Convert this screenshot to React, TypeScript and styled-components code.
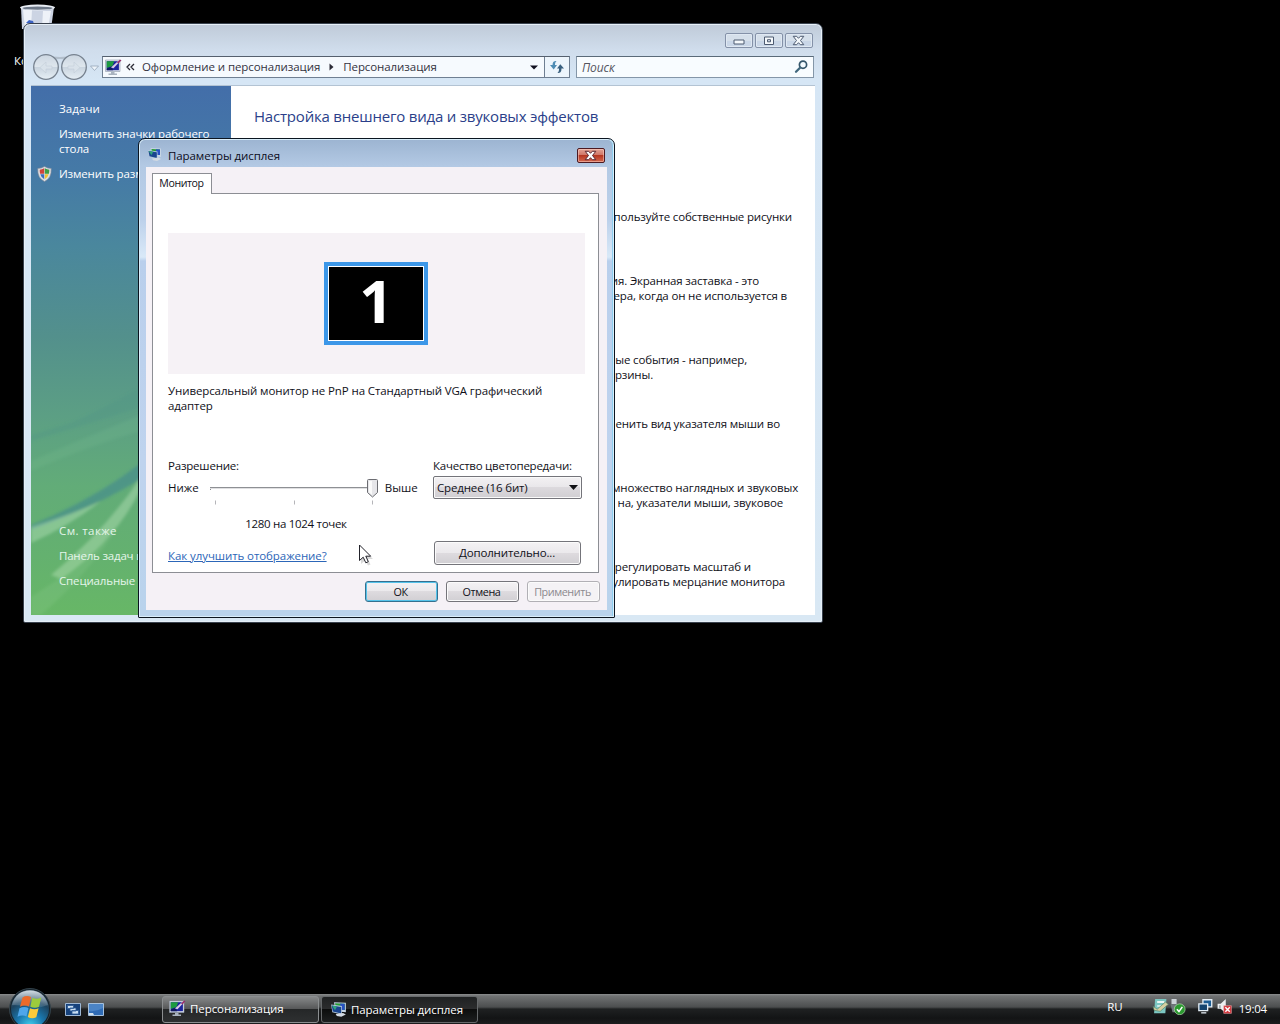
import React from "react";
import styled, { createGlobalStyle, css } from "styled-components";

const GlobalStyle = createGlobalStyle`
  * {
    box-sizing: border-box;
  }
  body {
    margin: 0;
    background: #000;
    overflow: hidden;
  }
  button {
    font: inherit;
    letter-spacing: inherit;
    color: inherit;
    padding: 0;
  }
  svg {
    display: block;
    flex: none;
  }
`;

const Desktop = styled.div`
  position: relative;
  width: 1280px;
  height: 1024px;
  overflow: hidden;
  display: flex;
  flex-direction: column;
  justify-content: flex-end;
  background: #000;
  font-family: "Open Sans", "Noto Sans", sans-serif;
  font-size: 11.5px;
  line-height: 15px;
  letter-spacing: -0.08px;
  color: #101018;
  white-space: nowrap;
`;

const DesktopIcon = styled.div`
  position: absolute;
  left: 14px;
  top: 2px;
  color: #fff;

  svg {
    margin: 0 0 24px 5px;
  }
`;

/* ---------- explorer window ---------- */

const Explorer = styled.section`
  position: absolute;
  left: 23px;
  top: 23px;
  width: 800px;
  height: 600px;
  padding: 0 7px 7px;
  border: 1px solid #39424e;
  border-radius: 7px 7px 2px 2px;
  background: linear-gradient(#bfcad8, #d0ddec 26px, #d6e6f5 56px, #d9e8f4);
  box-shadow: inset 0 0 0 1px #e6eff7;
`;

const Caption = styled.header`
  height: 32px;
  padding: 9px 2px 0 0;
  display: flex;
  justify-content: flex-end;
  align-items: flex-start;
  gap: 2px;
`;

const CaptionButton = styled.button`
  width: 28px;
  height: 15px;
  display: grid;
  place-items: center;
  border: 1px solid #8491a8;
  border-radius: 2px;
  background: linear-gradient(#d5dfea 50%, #c9d6e7 50%);
  box-shadow: inset 0 0 0 1px #dfe8f2;

  svg {
    margin-right: 1px;
  }
`;

const NavBar = styled.div`
  height: 30px;
  display: flex;
  align-items: flex-start;
`;

const AddressBar = styled.div`
  width: 468px;
  height: 22px;
  margin-left: 3px;
  padding-left: 2px;
  display: flex;
  align-items: center;
  border: 1px solid #6f7f92;
  border-top-color: #55606e;
  background: #f6fafe;
  color: #33333f;
`;

const Crumb = styled.span`
  padding-bottom: 2px;
`;

const RefreshCell = styled.span`
  width: 25px;
  height: 20px;
  display: grid;
  place-items: center;
  border-left: 1px solid #6f7f92;
  background: #edf5fc;
`;

const SearchBox = styled.div`
  width: 238px;
  height: 22px;
  margin-left: 6px;
  padding: 0 5px;
  display: flex;
  align-items: center;
  justify-content: space-between;
  border: 1px solid #8496a8;
  border-top-color: #5a6a79;
  background: #f8fcff;
  font-style: italic;
  font-size: 12px;
  color: #55555f;
`;

const ExplorerBody = styled.div`
  height: 529px;
  display: flex;
  background: #fff;
  box-shadow: 0 -1px 0 #b3c3d3;
`;

const Sidebar = styled.nav`
  position: relative;
  width: 200px;
  padding: 15px 0 27px 7px;
  display: flex;
  flex-direction: column;
  gap: 10px;
  overflow: hidden;
  color: #fff;
  background: linear-gradient(
    #436ea9,
    #457aa6 90px,
    #4a879d 160px,
    #53908c 250px,
    #5c9f84 330px,
    #62ac78 400px,
    #64b16f 470px,
    #67b766
  );
`;

const Swoosh = styled.svg`
  position: absolute;
  left: 0;
  bottom: 0;
`;

const TaskLink = styled.a<{ $spacing?: number; $dim?: boolean }>`
  position: relative;
  display: flex;
  align-items: flex-start;
  padding-left: 21px;
  letter-spacing: ${(props) => props.$spacing ?? -0.15}px;
  color: ${(props) => (props.$dim ? "#e4f5ea" : "#fff")};

  svg {
    margin: 0 7px 0 -22px;
  }
`;

const Spacer = styled.div`
  flex: 1;
`;

const Content = styled.main`
  flex: 1;
  padding-top: 19px;
`;

const Title = styled.h1`
  margin: 0 0 82px 23px;
  font-size: 15px;
  line-height: 22px;
  font-weight: 400;
  letter-spacing: -0.2px;
  color: #2b3f8a;
`;

const Paragraph = styled.p<{ $tight?: boolean }>`
  margin: 0 0 ${(props) => (props.$tight ? 34 : 49)}px;
`;

// строка прижата вправо, левая часть уходит под диалог
const Line = styled.span<{ $end: number }>`
  display: block;
  width: ${(props) => props.$end}px;
  text-align: right;
  letter-spacing: -0.16px;
`;

/* ---------- display dialog ---------- */

const Dialog = styled.section`
  position: absolute;
  left: 138px;
  top: 138px;
  width: 477px;
  height: 480px;
  padding: 0 7px 7px;
  border: 1px solid #0b1520;
  border-radius: 7px 7px 1px 1px;
  background: linear-gradient(
    #9cb4d1,
    #b3c9e4 27px,
    #bcd0ea 80px,
    #d9e9f8 118px,
    #b9cfec 122px,
    #bfd3ee 320px,
    #b9d3ec
  );
  box-shadow: inset 0 0 0 1px #d9eefb, inset -2px 0 0 #8fcdee;
`;

const DialogCaption = styled.header`
  height: 28px;
  padding: 6px 2px 0 1px;
  display: flex;
  align-items: flex-start;
  color: #0c0c1c;

  > svg {
    margin-top: 2px;
  }
`;

const DialogTitle = styled.span`
  flex: 1;
  padding-top: 3px;
  margin-left: 6px;
`;

const CloseButton = styled.button`
  width: 28px;
  height: 15px;
  margin-top: 3px;
  padding-right: 1px;
  display: grid;
  place-items: center;
  border: 1px solid #4c1a22;
  border-radius: 2px;
  background: linear-gradient(#e2a395, #cf7465 48%, #b53722 50%, #d4674e);
  box-shadow: inset 0 0 0 1px rgba(255, 215, 205, 0.5);
`;

const DialogBody = styled.div`
  height: 443px;
  padding: 6px 8px 0 6px;
  background: #f5f1f6;
`;

const Tab = styled.div`
  position: relative;
  z-index: 1;
  width: 60px;
  height: 21px;
  margin-bottom: -1px;
  padding: 2px 1px 0 0;
  text-align: center;
  font-size: 10.6px;
  letter-spacing: -0.4px;
  border: 1px solid #8c8e94;
  border-bottom: 0;
  background: #fff;
`;

const TabPage = styled.div`
  height: 380px;
  padding: 39px 13px 0 15px;
  border: 1px solid #8c8e94;
  background: #fff;
`;

const Preview = styled.div`
  height: 141px;
  padding-right: 1px;
  display: grid;
  place-items: center;
  background: #f6f2f6;
`;

const MonitorTile = styled.div`
  width: 104px;
  height: 83px;
  border: 4px solid #3c97e8;
  box-shadow: inset 0 0 0 1px #fff;
  background: #000;
  color: #fff;
  display: flex;
  justify-content: center;
  font-size: 59px;
  font-weight: 700;
  line-height: 69px;
`;

const MonitorName = styled.p`
  margin: 9px 0 45px;
  letter-spacing: -0.1px;
`;

const Settings = styled.div`
  display: flex;
  justify-content: space-between;
`;

const Resolution = styled.div`
  width: 252px;
  letter-spacing: -0.2px;
`;

const SliderRow = styled.div`
  display: flex;
  height: 29px;
  margin-top: 7px;
  letter-spacing: 0;
`;

const ResolutionValue = styled.div`
  margin-top: 7px;
  padding-left: 4px;
  text-align: center;
  letter-spacing: -0.3px;
`;

const Quality = styled.div`
  width: 149px;
  margin-right: 3px;
  letter-spacing: -0.24px;
`;

const Select = styled.div`
  height: 23px;
  margin-top: 3px;
  padding: 0 3px 1px 3px;
  display: flex;
  align-items: center;
  justify-content: space-between;
  letter-spacing: -0.15px;
  border: 1px solid #74747a;
  border-radius: 2px;
  background: linear-gradient(#f3f1f3, #e9e7ea 48%, #dcd9dd 50%, #d0ced2);
  box-shadow: inset 0 0 0 1px #fafafa;
`;

const PageFooter = styled.div`
  margin-top: 10px;
  padding-right: 4px;
  display: flex;
  justify-content: space-between;
  align-items: flex-start;
`;

const HelpLink = styled.a`
  margin-top: 7px;
  color: #2c66b8;
  text-decoration: underline;
`;

const PushButton = styled.button<{
  $wide?: boolean;
  $primary?: boolean;
  $disabled?: boolean;
}>`
  width: ${(props) => (props.$wide ? 147 : 73)}px;
  height: ${(props) => (props.$wide ? 24 : 21)}px;
  padding: ${(props) => (props.$wide ? "0 1px 2px 0" : "0 2px 0 0")};
  font-size: ${(props) => (props.$wide ? 11.5 : 10.8)}px;
  letter-spacing: ${(props) => (props.$wide ? -0.15 : -0.42)}px;
  border: 1px solid #74747a;
  border-radius: 3px;
  background: linear-gradient(#f4f2f4, #ebe9ec 48%, #dedbdf 50%, #d1cfd3);
  box-shadow: inset 0 0 0 1px #fbfbfb;

  ${(props) =>
    props.$primary &&
    css`
      border-color: #35708f;
      box-shadow: inset 0 0 0 1px #55c3ea;
    `}

  ${(props) =>
    props.$disabled &&
    css`
      color: #8b898e;
      border-color: #b1b0b5;
      background: #f4f2f5;
    `}
`;

const DialogButtons = styled.footer`
  margin-top: 8px;
  display: flex;
  justify-content: flex-end;
  gap: 8px;
  margin-right: -1px;
`;

const Cursor = styled.svg`
  position: absolute;
  left: 358px;
  top: 544px;
`;

/* ---------- taskbar ---------- */

const Taskbar = styled.footer`
  position: relative;
  height: 30px;
  display: flex;
  align-items: flex-start;
  color: #fff;
  background: linear-gradient(
    #8b8d8e,
    #707273 2px,
    #4c4e4f 13px,
    #1f2122 15px,
    #131415 24px,
    #1c1d1e
  );
`;

const StartOrb = styled.button`
  width: 44px;
  height: 36px;
  margin: -6px 13px 0 8px;
  border: 0;
  background: none;
`;

const QuickLaunch = styled.div`
  width: 97px;
  padding-top: 9px;
  display: flex;
  gap: 7px;
`;

const TaskButton = styled.button<{ $active?: boolean }>`
  width: 157px;
  height: 27px;
  margin: 2px 2px 0 0;
  padding: ${(props) => (props.$active ? "0 0 0 8px" : "0 0 2px 6px")};
  display: flex;
  align-items: center;
  gap: 4px;
  border: 1px solid ${(props) => (props.$active ? "#66696b" : "#8b8e90")};
  border-radius: 3px;
  color: #fff;
  background: ${(props) =>
    props.$active
      ? "linear-gradient(#1f2122, #2b2c2d 46%, #0c0d0d 50%, #1d1f20)"
      : "linear-gradient(#868889, #58595a 46%, #252728 50%, #2e3031)"};
`;

const Tray = styled.div`
  flex: 1;
  padding: 4px 13px 0 0;
  display: flex;
  justify-content: flex-end;
`;

const Language = styled.span`
  margin: 1px 29px 0 0;
`;

const Clock = styled.span`
  margin: 3px 0 0 5px;
  letter-spacing: -0.2px;
`;

const TrayIcons = styled.span`
  display: flex;
`;

/* ---------- drawings ---------- */

const BinIcon = () => (
  <svg width="38" height="27" viewBox="0 0 38 27">
    <path d="M2 5h33l-3 22H3z" fill="#ccd4e3" />
    <path d="M4 8h9l-1 18H6zM24 9h8l-3 17h-6z" fill="#eef2f8" />
    <ellipse cx="18.500" cy="5.500" rx="17.500" ry="3" fill="#e8edf4" />
    <ellipse cx="18.500" cy="6.200" rx="15" ry="1.600" fill="#6d7888" />
    <path d="M7 21l3-3 4 1 1 3z" fill="#3c63c4" />
  </svg>
);

const NavDrawing = styled.svg`
  margin-top: -4px;
`;

const NavButtons = () => (
  <NavDrawing width="68" height="30" viewBox="0 0 68 30">
    <defs>
      <linearGradient id="nav" x1="0" y1="0" x2="0" y2="1">
        <stop offset="0" stopColor="#ccd6e1" />
        <stop offset=".48" stopColor="#dee6ed" />
        <stop offset=".5" stopColor="#c9d4df" />
        <stop offset="1" stopColor="#e6eff5" />
      </linearGradient>
    </defs>
    <path d="M15 2.500q14 5 28 0v6q-14-3-28 0z" fill="#b3bfcc" />
    <circle cx="15" cy="15" r="12.300" fill="url(#nav)" stroke="#77828f" strokeWidth="1.300" />
    <circle cx="43" cy="15" r="12.300" fill="url(#nav)" stroke="#77828f" strokeWidth="1.300" />
    <path d="M15 10l-6 5.500 6 5.500v-4h6v-3h-6zM43 10l6 5.500-6 5.500v-4h-6v-3h6z" fill="#d9e2ea" stroke="#c3ced9" strokeWidth=".6" />
    <path d="M59.500 14h8l-4 4.500z" fill="#eef4fa" stroke="#94a5b8" strokeWidth=".8" />
  </NavDrawing>
);

const PersonalizeIcon = () => (
  <svg width="17" height="17" viewBox="0 0 17 17">
    <path d="M.5 1h14.500v11.500H.5z" fill="#dde3ec" stroke="#8e99a8" strokeWidth=".6" />
    <path d="M1.700 2.200h12.200v9H1.700z" fill="#1b249c" />
    <path d="M1.700 2.200h7.500L7.500 7l-5.800 2z" fill="#1d9b3f" />
    <path d="M1.700 9.500l4.500-1.500 2 3.200H1.700z" fill="#111a60" />
    <path d="M6 8.500L14.500.7l1.300.8-7.300 7.800z" fill="#d9c9e6" />
    <path d="M12 3.500L15 .5l1.500.8-3 3.200z" fill="#96306a" />
    <path d="M6 12.800h3.500v1.700H12V16H3.500v-1.500H6z" fill="#a9b3bf" />
  </svg>
);

const DisplayIcon = ({ size = 15 }: { size?: number }) => (
  <svg width={size} height={size} viewBox="0 0 15 15">
    <path d="M3.500 1L14 1.500v8.500L5 9z" fill="#c6d5e4" />
    <path d="M4.500 2l8.500.4V8L5 7.500z" fill="#279b35" />
    <path d="M9 2.200l4 .2V8L9 7.700z" fill="#2950c4" />
    <path d="M1 3l9.500 1.500v7.500L2 10z" fill="#b5c9dc" />
    <path d="M1.500 3.900L9.800 5.200v5.900L2.500 9.200z" fill="#1a458f" />
    <path d="M1.700 4l4.500.8-1.800 3.400z" fill="#2fa57c" />
    <path d="M5 11.500l6.500-1L14 12l-4 2-4-.8z" fill="#d3dae2" />
  </svg>
);

const ShieldIcon = () => (
  <svg width="15" height="16" viewBox="0 0 15 16">
    <path d="M7.500.5q3 2 6.700 2 .6 9.500-6.700 13Q.2 12 .8 2.500q3.700 0 6.700-2z" fill="#dcdfe3" stroke="#8b8f98" strokeWidth=".6" />
    <path d="M7.200 2.300Q5 3.600 2.700 3.800q0 2.200.4 4h4.100z" fill="#d0443c" />
    <path d="M7.800 2.300q2.200 1.300 4.500 1.500 0 2.200-.4 4H7.800z" fill="#3f9f45" />
    <path d="M3.300 8.300h3.900v5Q4.300 11.800 3.300 8.300z" fill="#3b6cc0" />
    <path d="M11.700 8.300H7.800v5q2.900-1.500 3.900-5z" fill="#f2c232" />
  </svg>
);

const SidebarSwoosh = () => (
  <Swoosh width="200" height="280" viewBox="0 0 200 280">
    <defs>
      <filter id="soft">
        <feGaussianBlur stdDeviation="1.500" />
      </filter>
    </defs>
    <g filter="url(#soft)">
      <path d="M40 88Q80 70 110 52v20Q60 88 0 106v-6z" fill="#4d9186" opacity=".35" />
      <path d="M0 126Q70 96 110 80v16Q60 110 0 136z" fill="#86c79b" opacity=".15" />
      <path d="M0 190Q60 166 110 128v16Q60 174 0 195z" fill="#3f8790" opacity=".6" />
      <path d="M0 192Q50 176 70 166 40 190 0 208z" fill="#b4dfb8" opacity=".45" />
      <path d="M110 142Q74 196 20 240l10 4Q84 206 110 154z" fill="#c0e6bd" opacity=".4" />
      <path d="M0 262Q46 234 84 196 56 240 10 280H0z" fill="#a4daa0" opacity=".15" />
    </g>
  </Swoosh>
);

const RefreshIcon = () => (
  <svg width="16" height="14" viewBox="0 0 16 14">
    <path d="M7.500 1Q4 .6 3.600 4v1H1L4.700 9.500 8 5H6V4Q6 2.300 7.500 1z" fill="#4e8cb4" />
    <path d="M8.500 13q3.500.4 3.900-3V8.500H15L11.300 4.300 8 8.500h2V10q0 1.700-1.500 3z" fill="#39607f" />
  </svg>
);

const SearchIcon = () => (
  <svg width="14" height="14" viewBox="0 0 14 14">
    <circle cx="9" cy="4.700" r="3.600" fill="#f4fbff" stroke="#35566b" strokeWidth="1.700" />
    <path d="M6.300 7.500L2 11.800" stroke="#41687e" strokeWidth="2.300" strokeLinecap="round" />
  </svg>
);

const CrossIcon = ({ stroke, fill }: { stroke: string; fill: string }) => (
  <svg width="13" height="11" viewBox="0 0 13 11">
    <path
      d="M1.200 1.300h3.500L6.500 3.300l1.800-2h3.500L8.500 5.500l3.300 4.200H8.300l-1.800-2-1.800 2H1.200L4.500 5.500z"
      fill={fill}
      stroke={stroke}
      strokeWidth="1"
    />
  </svg>
);

const SliderDrawing = styled.svg`
  margin: -1px 5px 0 9px;
`;

const Slider = () => (
  <SliderDrawing width="172" height="30" viewBox="0 0 172 30">
    <path d="M2.500 8v3" stroke="#8e9094" />
    <path d="M2 8.500h162" stroke="#8e9094" />
    <path d="M2 9.500h162" stroke="#e0e0e2" />
    <path d="M7.500 21.500v4M86.500 21.500v4M164.500 21.500v4" stroke="#b5b5b9" />
    <path d="M159.500 1.500q0-1 1-1h8q1 0 1 1v12l-5 4.500-5-4.500z" fill="#e6e6e9" stroke="#6c6d72" />
    <path d="M161 2h3v14l-3-2.700z" fill="#fafafa" />
  </SliderDrawing>
);

const StartIcon = () => (
  <svg width="44" height="37" viewBox="0 0 44 37">
    <defs>
      <radialGradient id="orb" cx=".5" cy=".95" r=".9">
        <stop offset="0" stopColor="#3fd0ee" />
        <stop offset=".4" stopColor="#1a77ad" />
        <stop offset=".75" stopColor="#1c435f" />
        <stop offset="1" stopColor="#5f7484" />
      </radialGradient>
      <linearGradient id="gloss" x1="0" y1="0" x2="0" y2="1">
        <stop offset="0" stopColor="#e4ecf2" stopOpacity=".85" />
        <stop offset="1" stopColor="#a9bccb" stopOpacity=".15" />
      </linearGradient>
    </defs>
    <circle cx="22" cy="21" r="20.500" fill="#15222b" stroke="#34434c" />
    <circle cx="22" cy="21" r="19" fill="url(#orb)" />
    <path d="M4 17Q8 2.500 22 2.500T40 17Q30 21 22 19T4 17z" fill="url(#gloss)" />
    <path d="M14.500 9.500q4-2.500 8.500-.5L21 18.500q-4.500-2-9 .3z" fill="#ec6a2a" />
    <path d="M24.300 9.800q4.500 2 9-.3L31 18.800q-4 2-8.700 0z" fill="#9ccb3c" />
    <path d="M11.500 20.300q4.500-2.300 9-.3L18.500 28.500q-4.300-2-9 .3z" fill="#4fa6ea" />
    <path d="M22 20.300q4.500 2 8.600 0l-2.300 9q-4.500 2-8.500-.3z" fill="#fbcb3a" />
  </svg>
);

const SwitchWindowsIcon = () => (
  <svg width="16" height="13" viewBox="0 0 16 13">
    <path d="M.5.5h15v12H.5z" fill="#16427c" stroke="#9fb8d4" />
    <path d="M2.500 2.500h6v3h-6zM5 5h6v3H5zM7 7.500h6.500v3.500H7z" fill="#c9def2" stroke="#2a5893" strokeWidth=".8" />
  </svg>
);

const ShowDesktopIcon = () => (
  <svg width="16" height="13" viewBox="0 0 16 13">
    <path d="M.5.5h15v12H.5z" fill="#2f6bb5" stroke="#a6c0db" />
    <path d="M1 1h14v4Q8 9 1 8z" fill="#4b84c6" />
    <path d="M1 10h4l1 2H1z" fill="#cfe0ee" />
  </svg>
);

const TrayDrawings = () => (
  <svg width="82" height="17" viewBox="0 0 80 16.600">
    <path d="M3 1h11l-1 14H2z" fill="#7cc7c2" />
    <path d="M5 3h7v2H5zM5 7h6v1.500H5z" fill="#e9f6f3" />
    <path d="M1 8l4 3 8-7 3 2-8 7-6-1z" fill="#d6cfa0" stroke="#4a7d62" strokeWidth=".6" />
    <path d="M19 1h5v5h-5z" fill="#cdd3d8" />
    <path d="M18 6h8v8h-6z" fill="#70777c" />
    <circle cx="27" cy="11" r="5.300" fill="#2c9a30" stroke="#c4e8bf" strokeWidth=".6" />
    <path d="M24.300 11l2 2.300 3.300-4.600" fill="none" stroke="#fff" strokeWidth="1.500" />
    <path d="M49.700 1.700h8.600v7h-8.600z" fill="#1c5d94" stroke="#e4eef6" strokeWidth="1.300" />
    <path d="M45.700 5.700h8.600v6.600h-8.600z" fill="#14446e" stroke="#e4eef6" strokeWidth="1.300" />
    <path d="M48 14.500h5" stroke="#dfe8ef" strokeWidth="1.300" />
    <path d="M64 5.500h3l5-4.500v14l-5-4.500h-3z" fill="#eceff1" />
    <path d="M65.500 7h1.500v3h-1.500z" fill="#98a1a8" />
    <path d="M70 7.500h7.500v7.500H70z" fill="#d3323a" stroke="#f3b5b5" strokeWidth=".5" />
    <path d="M71.600 9.100l4.300 4.300m0-4.300l-4.300 4.300" stroke="#fff" strokeWidth="1.400" />
  </svg>
);

const paragraphs = [
  { lines: [{ text: "пользуйте собственные рисунки", end: 561 }] },
  {
    lines: [
      { text: "ия. Экранная заставка - это", end: 528 },
      { text: "ера, когда он не используется в", end: 556 },
    ],
  },
  {
    tight: true,
    lines: [
      { text: "ые события - например,", end: 516 },
      { text: "рзины.", end: 422 },
    ],
  },
  { lines: [{ text: "енить вид указателя мыши во", end: 549 }] },
  {
    lines: [
      { text: "множество наглядных и звуковых", end: 567 },
      { text: "на, указатели мыши, звуковое", end: 552 },
    ],
  },
  {
    lines: [
      { text: "регулировать масштаб и", end: 520 },
      { text: "улировать мерцание монитора", end: 554 },
    ],
  },
];

const ExplorerWindow = () => (
  <Explorer>
    <Caption>
      <CaptionButton>
        <svg width="12" height="9" viewBox="0 0 12 9">
          <path d="M1 4h10v4H1z" fill="#f4f8fb" stroke="#4d5a70" />
        </svg>
      </CaptionButton>
      <CaptionButton>
        <svg width="12" height="10" viewBox="0 0 12 10">
          <path d="M1.500 1h9v7.500h-9z" fill="#f4f8fb" stroke="#4d5a70" />
          <path d="M4.500 3.700h3v2.100h-3z" fill="#dfe7f0" stroke="#4d5a70" />
        </svg>
      </CaptionButton>
      <CaptionButton>
        <CrossIcon stroke="#4d5a70" fill="#f4f8fb" />
      </CaptionButton>
    </Caption>
    <NavBar>
      <NavButtons />
      <AddressBar>
        <PersonalizeIcon />
        <svg width="20" height="8" viewBox="0 0 20 8">
          <path d="M8 1L5 4l3 3M12 1L9 4l3 3" fill="none" stroke="#2b2b36" strokeWidth="1.300" />
        </svg>
        <Crumb>Оформление и персонализация</Crumb>
        <svg width="23" height="8" viewBox="0 0 23 8">
          <path d="M9.500.5v7l4-3.500z" fill="#2b2b36" />
        </svg>
        <Crumb>Персонализация</Crumb>
        <Spacer />
        <svg width="18" height="5" viewBox="0 0 18 5">
          <path d="M4 .5h8L8 4.500z" fill="#101020" />
        </svg>
        <RefreshCell>
          <RefreshIcon />
        </RefreshCell>
      </AddressBar>
      <SearchBox>
        Поиск
        <SearchIcon />
      </SearchBox>
    </NavBar>
    <ExplorerBody>
      <Sidebar>
        <SidebarSwoosh />
        <TaskLink $spacing={0.1}>Задачи</TaskLink>
        <TaskLink>
          Изменить значки рабочего
          <br />
          стола
        </TaskLink>
        <TaskLink>
          <ShieldIcon />
          Изменить разм
        </TaskLink>
        <Spacer />
        <TaskLink $dim $spacing={0.4}>
          См. также
        </TaskLink>
        <TaskLink $dim $spacing={-0.2}>
          Панель задач и
        </TaskLink>
        <TaskLink $dim>Специальные</TaskLink>
      </Sidebar>
      <Content>
        <Title>Настройка внешнего вида и звуковых эффектов</Title>
        {paragraphs.map(({ lines, tight }, index) => (
          <Paragraph key={index} $tight={tight}>
            {lines.map((line) => (
              <Line key={line.text} $end={line.end}>
                {line.text}
              </Line>
            ))}
          </Paragraph>
        ))}
      </Content>
    </ExplorerBody>
  </Explorer>
);

const DisplayDialog = () => (
  <Dialog>
    <DialogCaption>
      <DisplayIcon />
      <DialogTitle>Параметры дисплея</DialogTitle>
      <CloseButton>
        <CrossIcon stroke="#5a2730" fill="#fff" />
      </CloseButton>
    </DialogCaption>
    <DialogBody>
      <Tab>Монитор</Tab>
      <TabPage>
        <Preview>
          <MonitorTile>1</MonitorTile>
        </Preview>
        <MonitorName>
          Универсальный монитор не PnP на Стандартный VGA графический
          <br />
          адаптер
        </MonitorName>
        <Settings>
          <Resolution>
            Разрешение:
            <SliderRow>
              Ниже
              <Slider />
              Выше
            </SliderRow>
            <ResolutionValue>1280 на 1024 точек</ResolutionValue>
          </Resolution>
          <Quality>
            Качество цветопередачи:
            <Select>
              Среднее (16 бит)
              <svg width="9" height="5" viewBox="0 0 9 5">
                <path d="M0 0h9L4.500 5z" fill="#101014" />
              </svg>
            </Select>
          </Quality>
        </Settings>
        <PageFooter>
          <HelpLink>Как улучшить отображение?</HelpLink>
          <PushButton $wide>Дополнительно...</PushButton>
        </PageFooter>
      </TabPage>
      <DialogButtons>
        <PushButton $primary>ОК</PushButton>
        <PushButton>Отмена</PushButton>
        <PushButton $disabled>Применить</PushButton>
      </DialogButtons>
    </DialogBody>
  </Dialog>
);

const App = () => {
  return (
    <Desktop>
      <GlobalStyle />
      <DesktopIcon>
        <BinIcon />
        Ко
      </DesktopIcon>
      <ExplorerWindow />
      <DisplayDialog />
      <Cursor width="16" height="22" viewBox="0 0 16 22">
        <path d="M3 3v17l4-3.500 3 5 2.500-1-2.500-5.500H15z" fill="#000" opacity=".15" />
        <path d="M1.500 1v15.500l3.700-3.300 2.600 5.600 2.500-1.100-2.500-5.500h4.900z" fill="#fff" stroke="#22222a" />
      </Cursor>
      <Taskbar>
        <StartOrb>
          <StartIcon />
        </StartOrb>
        <QuickLaunch>
          <SwitchWindowsIcon />
          <ShowDesktopIcon />
        </QuickLaunch>
        <TaskButton>
          <PersonalizeIcon />
          Персонализация
        </TaskButton>
        <TaskButton $active>
          <DisplayIcon size={17} />
          Параметры дисплея
        </TaskButton>
        <Tray>
          <Language>RU</Language>
          <TrayIcons>
            <TrayDrawings />
          </TrayIcons>
          <Clock>19:04</Clock>
        </Tray>
      </Taskbar>
    </Desktop>
  );
};

export default App;
